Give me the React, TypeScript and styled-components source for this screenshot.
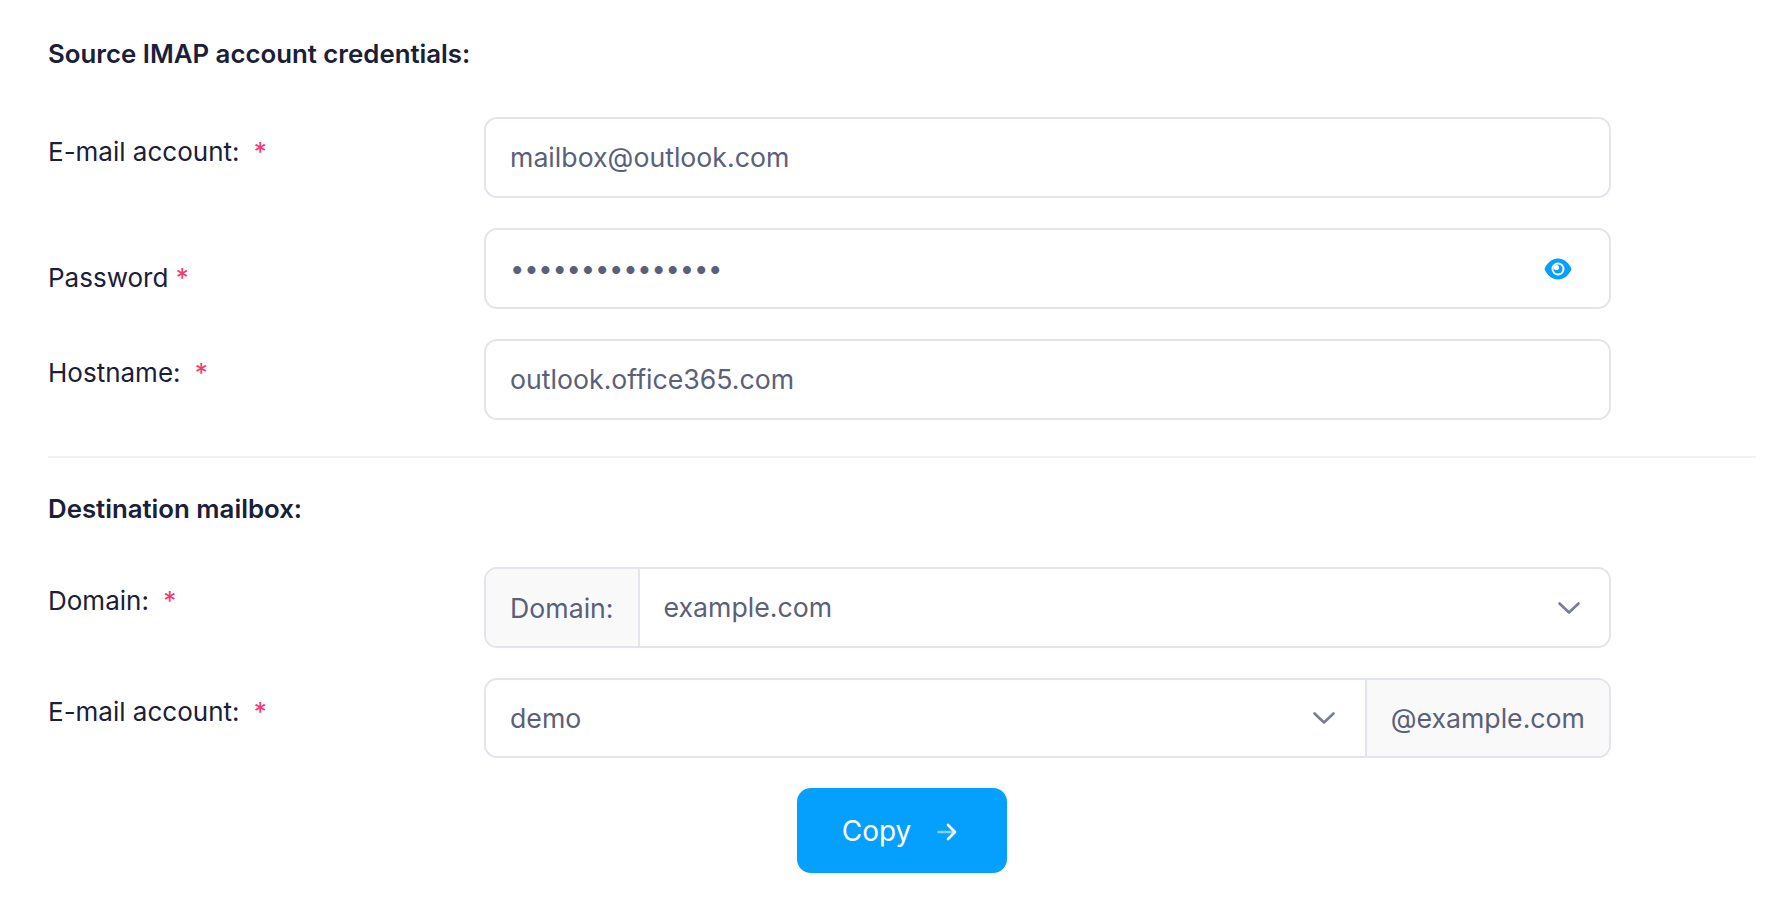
import React from "react";
import styled, { createGlobalStyle } from "styled-components";

const GlobalStyle = createGlobalStyle`
  html, body {
    margin: 0;
    background: #fff;
  }
  * {
    box-sizing: border-box;
  }
`;

const EyeIcon = () => (
  <svg width="28" height="22" viewBox="0 0 28 22" aria-hidden="true">
    <path
      d="M14 .5C21 .5 25.5 6 27.5 11 25.5 16 21 21.500 14 21.500S2.500 16 .5 11C2.500 6 7 .5 14 .5Z"
      fill="#05a0fd"
    />
    <circle cx="14" cy="11" r="6.500" fill="#fff" />
    <circle cx="14" cy="11" r="4.500" fill="#05a0fd" />
    <circle cx="12.500" cy="9.500" r="2.600" fill="#fff" />
  </svg>
);

const Chevron = () => (
  <svg width="24" height="14" viewBox="0 0 24 14" fill="none" aria-hidden="true">
    <path d="M2.500 2.500l9.500 9 9.500-9" stroke="#787d95" strokeWidth="2.600" strokeLinecap="round" strokeLinejoin="round" />
  </svg>
);

const ArrowIcon = () => (
  <svg width="20" height="18" viewBox="0 0 20 18" fill="none" aria-hidden="true">
    <path d="M1.500 9H16" stroke="#fff" strokeOpacity="0.5" strokeWidth="2.600" strokeLinecap="round" />
    <path d="M11 2l7 7-7 7" stroke="#fff" strokeWidth="2.600" strokeLinecap="round" strokeLinejoin="round" />
  </svg>
);

const App: React.FC = () => {
  return (
    <Page>
      <GlobalStyle />
      <Heading>Source IMAP account credentials:</Heading>
      <Row $gap={30}>
        <Label $offset={16}>
          E-mail account: <Star $wide>*</Star>
        </Label>
        <Field>
          <Value>mailbox@outlook.com</Value>
        </Field>
      </Row>
      <Row $gap={30}>
        <Label $offset={31}>
          Password <Star>*</Star>
        </Label>
        <Field>
          <Dots type="password" value="aaaaaaaaaaaaaaa" readOnly />
          <IconSlot>
            <EyeIcon />
          </IconSlot>
        </Field>
      </Row>
      <Row $gap={36}>
        <Label $offset={15}>
          Hostname: <Star $wide>*</Star>
        </Label>
        <Field>
          <Value>outlook.office365.com</Value>
        </Field>
      </Row>
      <Divider />
      <Heading $second>Destination mailbox:</Heading>
      <Row $gap={30}>
        <Label $offset={15}>
          Domain: <Star $wide>*</Star>
        </Label>
        <Field>
          <Addon $side="left">Domain:</Addon>
          <Value>example.com</Value>
          <ChevronSlot $inset={28}>
            <Chevron />
          </ChevronSlot>
        </Field>
      </Row>
      <Row $gap={30}>
        <Label $offset={15}>
          E-mail account: <Star $wide>*</Star>
        </Label>
        <Field $height={80}>
          <Value>demo</Value>
          <ChevronSlot $inset={29}>
            <Chevron />
          </ChevronSlot>
          <Addon $side="right">@example.com</Addon>
        </Field>
      </Row>
      <Actions>
        <CopyButton type="button">
          Copy
          <ArrowIcon />
        </CopyButton>
      </Actions>
    </Page>
  );
};

const Page = styled.div`
  width: 1756px;
  padding: 36px 0 0 48px;
  font-family: Inter, "Liberation Sans", sans-serif;
  font-size: 26px;
  line-height: 38px;
  color: #1a2038;
`;

const Heading = styled.h2<{ $second?: boolean }>`
  margin: 0 0 ${(props) => (props.$second ? "40px" : "45px")};
  font-size: 25.8px;
  line-height: 36px;
  font-weight: 600;
`;

const Row = styled.div<{ $gap: number }>`
  display: grid;
  grid-template-columns: 436px 1127px;
  margin-bottom: ${(props) => props.$gap}px;
`;

const Label = styled.label<{ $offset: number }>`
  padding-top: ${(props) => props.$offset}px;
  white-space: pre-wrap;
`;

const Star = styled.span<{ $wide?: boolean }>`
  margin-left: ${(props) => (props.$wide ? "7px" : "0")};
  color: #f5396e;
`;

const Field = styled.div<{ $height?: number }>`
  display: flex;
  align-items: stretch;
  height: ${(props) => props.$height ?? 81}px;
  border: 2px solid #e2e5ec;
  border-radius: 13px;
  overflow: hidden;
  font-size: 26.7px;
  color: #5b6079;
`;

const Value = styled.div`
  flex: 1;
  display: flex;
  align-items: center;
  padding: 0 24px 1px;
`;

const Dots = styled.input`
  flex: 1;
  min-width: 0;
  padding: 0 24px 2px;
  border: 0;
  outline: 0;
  background: transparent;
  font: inherit;
  font-size: 25.6px;
  color: inherit;
  letter-spacing: -0.25px;
`;

const IconSlot = styled.div`
  display: flex;
  align-items: center;
  padding-right: 37px;
`;

const ChevronSlot = styled.div<{ $inset: number }>`
  display: flex;
  align-items: center;
  padding-right: ${(props) => props.$inset}px;
`;

const Addon = styled.div<{ $side: "left" | "right" }>`
  display: flex;
  align-items: center;
  padding: 0 24px;
  background: #f9f9fa;
  border-${(props) => (props.$side === "left" ? "right" : "left")}: 2px solid #e2e5ec;
`;

const Divider = styled.hr`
  height: 2px;
  margin: 0 0 33px;
  border: 0;
  background: #f2f3f6;
`;

const Actions = styled.div`
  display: flex;
  justify-content: center;
`;

const CopyButton = styled.button`
  display: flex;
  align-items: center;
  gap: 26px;
  height: 85px;
  padding: 0 50px 0 45px;
  border: 0;
  border-radius: 14px;
  background: #05a0fd;
  font: inherit;
  font-size: 28px;
  color: #fff;

  svg {
    margin-top: 2px;
  }
`;

export default App;
